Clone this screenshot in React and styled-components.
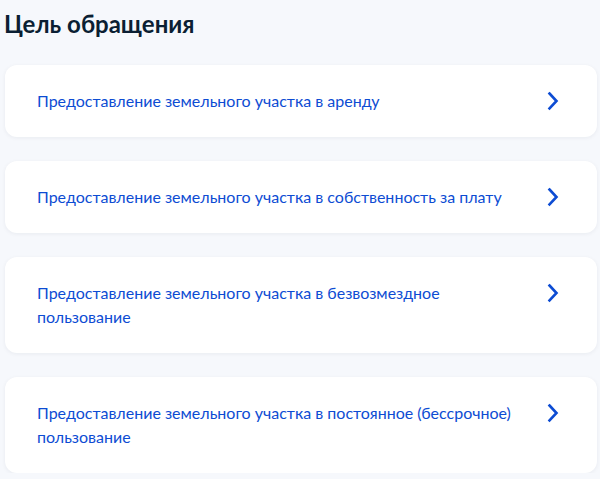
import React from "react";
import styled, { createGlobalStyle } from "styled-components";

const Global = createGlobalStyle`
  html, body { margin: 0; padding: 0; background: #f6f8fc; }
  body { font-family: Lato, "Noto Sans", sans-serif; }
`;

const Page = styled.div`
  padding: 8px 3px 0 5px;
  box-sizing: border-box;
  width: 600px;
`;

const Title = styled.h2`
  margin: 0 0 25px -1px;
  font-size: 24px;
  line-height: 32px;
  font-weight: 700;
  color: #0b1f33;
`;

const List = styled.div`
  display: flex;
  flex-direction: column;
  gap: 24px;
`;

const Card = styled.a`
  display: flex;
  align-items: flex-start;
  gap: 24px;
  padding: 24px 32px;
  background: #fff;
  border-radius: 12px;
  box-shadow: 0 1px 4px rgba(11, 31, 51, 0.06);
  text-decoration: none;
  cursor: pointer;
`;

const Label = styled.span`
  flex: 1;
  font-size: 16px;
  line-height: 24px;
  color: #0d4cd3;
`;

const Chevron = styled.svg`
  flex: none;
  width: 24px;
  height: 24px;
  color: #0d4cd3;
`;

const items = [
  "Предоставление земельного участка в аренду",
  "Предоставление земельного участка в собственность за плату",
  "Предоставление земельного участка в безвозмездное пользование",
  "Предоставление земельного участка в постоянное (бессрочное) пользование",
];

export default function App() {
  return (
    <>
      <Global />
      <Page>
        <Title>Цель обращения</Title>
        <List>
          {items.map((t) => (
            <Card key={t}>
              <Label>{t}</Label>
              <Chevron viewBox="0 0 24 24" fill="none">
                <path d="M8.5 4.5L15.5 12L8.5 19.5" stroke="currentColor" strokeWidth="2.6" strokeLinecap="square" strokeLinejoin="miter" />
              </Chevron>
            </Card>
          ))}
        </List>
      </Page>
    </>
  );
}
